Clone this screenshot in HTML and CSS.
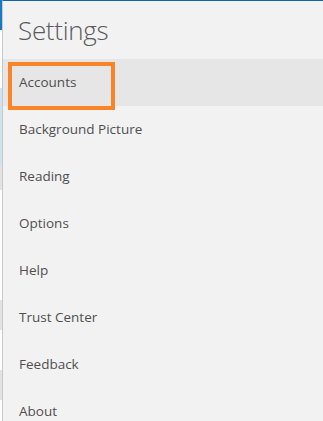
FILE: index.html
```html
<!DOCTYPE html>
<html lang="en">
  <head>
    <meta charset="UTF-8" />
    <meta name="viewport" content="width=device-width, initial-scale=1.0" />
    <title>Settings</title>
    <link rel="stylesheet" href="styles.css">
  </head>
  <body>
    <div class="backdrop">
      <span class="strip blue"></span>
      <span class="strip white" style="height: 58px"></span>
      <span class="strip pale" style="height: 77px"></span>
      <span class="strip grey" style="height: 25px"></span>
      <span class="strip white" style="height: 110px"></span>
      <span class="strip grey" style="height: 30px"></span>
      <span class="strip white" style="height: 40px"></span>
      <span class="strip grey" style="height: 30px"></span>
    </div>

    <aside class="panel">
      <h1 class="title">Settings</h1>
      <nav class="menu">
        <a class="menu-item selected" href="#">Accounts</a>
        <a class="menu-item" href="#">Background Picture</a>
        <a class="menu-item" href="#">Reading</a>
        <a class="menu-item" href="#">Options</a>
        <a class="menu-item" href="#">Help</a>
        <a class="menu-item" href="#">Trust Center</a>
        <a class="menu-item" href="#">Feedback</a>
        <a class="menu-item" href="#">About</a>
      </nav>
    </aside>
  </body>
</html>
```

FILE: styles.css
```css
* {
  margin: 0;
  padding: 0;
  box-sizing: border-box;
}

html, body {
  height: 100%;
}

body {
  display: flex;
  overflow: hidden;
  background: #f2f2f2;
  font-family: "Open Sans", "Noto Sans", sans-serif;
  color: #444;
}

/* sliver of the app behind the flyout */
.backdrop {
  width: 2px;
  display: flex;
  flex-direction: column;
  background: #fff;
}

.strip {
  display: block;
  width: 100%;
  flex-shrink: 0;
}

.strip.blue {
  height: 30px;
  background: #1a78c8;
}

.strip.white {
  background: #fff;
}

.strip.pale {
  background: #cfe2f4;
}

.strip.grey {
  background: #e2e2e2;
}

.panel {
  flex: 1;
  border-left: 1px solid #c9c9c9;
  border-top: 1px solid #1363ad;
  background: #f2f2f2;
}

.title {
  height: 58px;
  padding: 13px 0 0 15px;
  font-size: 26px;
  font-weight: 300;
  color: #5a5a5a;
  line-height: 32px;
  letter-spacing: -0.3px;
}

.menu {
  display: flex;
  flex-direction: column;
}

.menu-item {
  position: relative;
  display: block;
  height: 47px;
  padding-left: 16px;
  line-height: 47px;
  font-size: 13.5px;
  color: #4f4f4f;
  text-decoration: none;
}

.menu-item.selected {
  background: #e6e6e6;
}

.menu-item.selected::after {
  content: "";
  position: absolute;
  left: 5px;
  top: 3px;
  width: 99px;
  height: 40px;
  border: 4px solid #fb8428;
}
```
